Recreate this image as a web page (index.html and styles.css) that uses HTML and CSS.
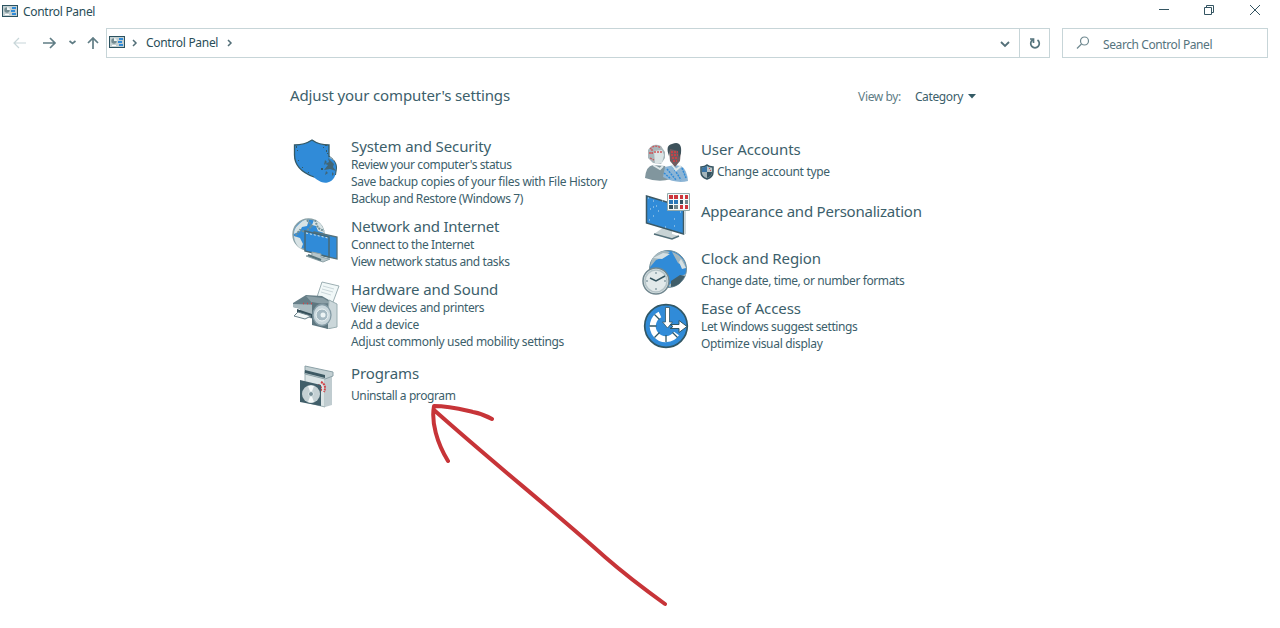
FILE: index.html
```html
<!DOCTYPE html>
<html lang="en">
<head>
<meta charset="utf-8">
<title>Control Panel</title>
<link rel="stylesheet" href="styles.css">
</head>
<body>
<svg width="0" height="0" class="defs">
  <defs>
    <symbol id="panel" viewBox="0 0 16 12">
      <rect x=".5" y=".5" width="15" height="11" fill="#c4d0d2" stroke="#2c5260"/>
      <circle cx="5" cy="5" r="2.700" fill="#738b91"/><path d="M5 5V2a3 3 0 0 1 3 3z" fill="#edf5f5"/>
      <path d="M10 2h4v2h-4zM9 5h4v2H9zM10 8h4v2h-4z" fill="#308bd8"/><path d="M3 9.500h4" stroke="#fff"/>
    </symbol>
  </defs>
</svg>
<header class="titlebar">
  <svg class="app-icon" width="16" height="12"><use href="#panel"/></svg>
  <span class="app-title">Control Panel</span>
  <svg class="window-controls" width="104" height="14" fill="none" stroke="#345562">
    <path d="M1 6.500h10M46.500 4.500h7v7h-7zM48.500 4.500v-2h7v7h-2M92 2l10 10M102 2L92 12"/>
  </svg>
</header>
<nav class="toolbar">
  <svg class="nav-icons" width="106" height="30" fill="none" stroke="#607d85" stroke-width="1.700">
    <path d="M26 15H14M19 10l-5 5 5 5" stroke="#c8d6d9" stroke-width="1.200"/>
    <path d="M43 15h12M50 10l5 5-5 5M93 21V10M88 15l5-5 5 5"/><path d="M69.500 13l3 2.500 3-2.500"/>
  </svg>
  <div class="address">
    <svg class="crumb-icon" width="16" height="12"><use href="#panel"/></svg>
    <svg class="chevron" width="6" height="8"><path d="M1 1l3 3-3 3"/></svg>
    <span class="crumb">Control Panel</span>
    <svg class="chevron" width="6" height="8"><path d="M1 1l3 3-3 3"/></svg>
    <svg class="drop" width="10" height="7"><path d="M1 1l4 4 4-4"/></svg>
    <span class="refresh"><svg width="12" height="13" fill="none" stroke="#55747d" stroke-width="1.700"><path d="M8.500 3a4.300 4.300 0 1 1-5 0M1 2h3.500v4"/></svg></span>
  </div>
  <div class="search">
    <svg width="14" height="14" fill="none" stroke="#6f8990" stroke-width="1.200"><circle cx="8.500" cy="5" r="4"/><path d="M5.500 8L1 12.500"/></svg>
    <span class="search-text">Search Control Panel</span>
  </div>
</nav>
<main>
  <div class="heading">
    <h1>Adjust your computer's settings</h1>
    <div class="view"><span class="label">View by:</span><span class="category">Category</span><svg width="8" height="5"><path d="M0 0h8L4 4.500z" fill="#345a65"/></svg></div>
  </div>
  <div class="columns">
    <div class="column left">
      <section class="item system">
        <svg class="icon" width="50" height="50">
          <path d="M4.500 9q10 0 17.500-5 7 5 17 5v12c0 10-7 17-15 20C13 37 4.500 30 4.500 19z" fill="#308bd8" stroke="#345966" stroke-width="1.300"/>
          <path d="M24 38c8-3 13-10 14-17 5 2 8 5 8.500 9 0 10-3 15-9 16.500-6 1-9-2-13.500-5z" fill="#308bd8"/>
          <path d="M39 20c4 3 7.500 6 7.500 12l-1 7" fill="none" stroke="#345966"/>
          <path d="M38 22l6 6-1 3 3 4-6-2-6 1 4-5-3-1 4-2z" fill="#426676"/><path d="M35 24l2 2-3 3zm1 11l2 2-3 2zm6 1l2 2-2 2z" fill="#426676"/><path d="M6 10h1v2H6zm29-1h2v1h-2zm1 5h1v2h-1zM31 32h2v2h-2zM7 14h1v1H7zm1 10h1v1H8zm4 7h1v1h-1zm6 5h1v1h-1zm15-25h1v1h-1zm4 6h1v1h-1z" fill="#345966"/>
        </svg>
        <div class="text"><h2>System and Security</h2><a>Review your computer's status</a><a class="wide">Save backup copies of your files with File History</a><a>Backup and Restore (Windows 7)</a></div>
      </section>
      <section class="item network">
        <svg class="icon" width="50" height="50">
          <circle cx="18.500" cy="18.500" r="15.500" fill="#308bd8" stroke="#8ba2a7" stroke-width="1.500"/>
          <path d="M8 9c4-5 8-6 11-5l-2 6-5 1-2 4-6 3c0-4 1-6 4-9zM4 20l6 2 3 6-2 5C7 30 4 25 4 20zm20-16c7 2 10 8 10 13l-6-2-2-5-4-1z" fill="#d8e3e5"/><path d="M17 4l5 6-7 6-5-2-5 6M25 4l3 8 6 3" fill="none" stroke="#718f97" stroke-width="2" stroke-dasharray="2 1"/>
          <path d="M24 16l23 5v22l-22-5z" fill="#308bd8" stroke="#56727a" stroke-width="1.300"/>
          <path d="M15 15l24 6v20l-24-6z" fill="#308bd8" stroke="#486974" stroke-width="1.500"/><path d="M16 17l22 5" stroke="#d9e5e7" stroke-dasharray="2 2"/>
          <path d="M22 36l9 2v3l9 2-7 3-17-6 6-1z" fill="#b7c6ca" stroke="#8da2a7"/><path d="M18 39l13 5" stroke="#55737b" stroke-width="2"/>
        </svg>
        <div class="text"><h2 class="close">Network and Internet</h2><a>Connect to the Internet</a><a>View network status and tasks</a></div>
      </section>
      <section class="item hardware">
        <svg class="icon" width="50" height="50">
          <path d="M27 18l5-15 17 4-6 16z" fill="#f1f8f8" stroke="#9dafb3"/><path d="M33 7l11 3M32 10l11 3M31 13l10 3" stroke="#cad7da"/>
          <path d="M3 24l13-8 16 1 12 7-10 11L3 28z" fill="#667e87"/><path d="M16 17l17 2 8 5-18 1z" fill="#8ca0a7"/>
          <path d="M3 25v3l7 2v6l13 4 11-4V26z" fill="#aabbc0"/><path d="M7 30l15 5v4L7 34z" fill="#344f59"/><path d="M8 33l13 4-6 3-11-3z" fill="#f3f8f8" stroke="#69818a"/>
          <path d="M39 21l8 4v23l-10 2z" fill="#cbd7da" stroke="#99adb1"/><path d="M22 23l16 3v24l-16-4z" fill="#5e7780"/><ellipse cx="32" cy="36" rx="9" ry="10.500" fill="#c9d7dc" stroke="#849ba5" stroke-width="1.300"/><circle cx="32" cy="36" r="6" fill="#a5b9c2" stroke="#edf5f6"/><circle cx="33" cy="36" r="2.500" fill="#ecf4f5"/><path d="M13 24.500h1m3 0h1m3 0h1" stroke="#d44144" stroke-width="1.500"/>
        </svg>
        <div class="text"><h2>Hardware and Sound</h2><a>View devices and printers</a><a class="natural">Add a device</a><a class="wide">Adjust commonly used mobility settings</a></div>
      </section>
      <section class="item programs">
        <svg class="icon" width="50" height="50">
          <path d="M15 8l20 5v31l-20-5z" fill="#dce5e6" stroke="#9eb0b4"/><path d="M35 13l7-2v31l-7 2z" fill="#c0ccd0"/><path d="M15 3l28 6v4l-8 3-20-5z" fill="#c3d0d3" stroke="#8ca1a7"/><path d="M15 7l20 5v3l-20-5z" fill="#3d5963"/>
          <path d="M31 19q6 3 3 10M28 22q5 2 2 7" fill="none" stroke="#d14448" stroke-width="2" stroke-dasharray="2 .7"/>
          <path d="M10 17l21 5v21l-21-4z" fill="#405e69"/><circle cx="21" cy="31" r="9" fill="#c4d0d3"/><path d="M21 31l-3-8a9 9 0 0 1 6 0zM21 31l3 8a9 9 0 0 1-6 0z" fill="#f5f9f9"/><circle cx="21" cy="31" r="2.500" fill="#768e96" stroke="#e2ebed"/>
        </svg>
        <div class="text spaced"><h2>Programs</h2><a>Uninstall a program</a></div>
      </section>
    </div>
    <div class="column right">
      <section class="item users">
        <svg class="icon" width="50" height="50">
          <path d="M4 38q1-12 8-13l12 1 6 13q-12 4-26-1z" fill="#81969e"/><path d="M7 10q5-8 13-4l4 6v6l-4 6-8-1-5-5z" fill="#a8b6ba"/><path d="M13 11l8-1 2 5-2 8-7 1z" fill="#dbe4e5"/><path d="M9 9q5-5 11-1M8 13h4M9 18l4 2M11 9v5M13 12h8" fill="none" stroke="#ce555a" stroke-width="1.300" stroke-dasharray="2 1"/>
          <path d="M22 37l2-10 9-2 7 1q6 3 7 15-12 3-25-4z" fill="#8db5d5"/><path d="M26 29l9 11M32 27l8 13M23 33l7 6M41 28l4 10" stroke="#308bd8" stroke-width="1.500" stroke-dasharray="2 1"/><path d="M28 9q5-5 12 0l-1 12-5 6-5-6z" fill="#705c61"/><path d="M28 16q-4-11 3-12c7-3 10 1 9 9l-2 5-1-7-8-2z" fill="#3d525b"/><path d="M30 12h7M30 15h7M31 18h6M32 21h4" stroke="#c34248" stroke-width="1.800" stroke-dasharray="2 1"/><path d="M12 25l7 4 3-3M31 25l4 5 5-4" fill="none" stroke="#dfe8ea" stroke-width="2"/>
        </svg>
        <div class="text spaced"><h2>User Accounts</h2><a class="shield-link wide"><svg width="14" height="16"><path d="M1 3q4 0 6-2 2 2 6 2v5q0 5-6 7-6-2-6-7z" fill="#a3b5ba" stroke="#355461" stroke-width="1.500"/><path d="M2 4l5-2v6H2z" fill="#3974a4"/><path d="M7 8h5q0 4-5 6z" fill="#345260"/><path d="M7 3l5 1v4H7z" fill="#bac5c7"/><path d="M9 4h1v1H9zm1 2h1v1h-1z" fill="#d14e52"/></svg>Change account type</a></div>
      </section>
      <section class="item appearance">
        <svg class="icon" width="50" height="50">
          <path d="M23 35l8 2v5l7 2-7 3-18-5z" fill="#c8d3d5"/><path d="M13 42l18 5 7-3" fill="none" stroke="#536f79" stroke-width="1.500"/>
          <path d="M5.500 4l37 11v27l-37-11z" fill="#308bd8" stroke="#3c5965" stroke-width="1.500"/><path d="M43 10h2v32h-2z" fill="#cbd6d9"/><path d="M7 6h1m4 3h1m8 0h1M9 17h1m2-2h1m4 4h1m-3-5h1M8 28h1m3-4h1m11 11h1m8-1h1m5-14h1m-7 7h1" stroke="#c8e0ec"/>
          <path d="M26.500 1.500h22v17h-22z" fill="#f5faf9" stroke="#91a9ab"/><path d="M28 3h4v4h-4zm5 0h4v4h-4zm6 0h3v4h-3zm5 0h3v4h-3zM39 13h3v4h-3zm5 0h3v4h-3z" fill="#cc353c"/><path d="M28 8h4v4h-4zM33 8h4v4h-4z" fill="#2b78b8"/><path d="M28 13h4v4h-4zM39 8h3v4h-3z" fill="#345260"/><path d="M33 13h4v4h-4zM44 8h3v4h-3z" fill="#71878e"/>
        </svg>
        <div class="text"><h2 class="close">Appearance and Personalization</h2></div>
      </section>
      <section class="item clock">
        <svg class="icon" width="50" height="50">
          <circle cx="27" cy="20" r="18.500" fill="#308bd8" stroke="#738e97"/><path d="M11 10c5-8 12-9 18-7l-6 5-8 3-5 6-1 1zM31 3c9 3 13 9 14 16l-8-5zM28 36l9-8 8-3c-2 7-8 12-17 13z" fill="#a4b7be"/><path d="M30 32l9-6 5 1c-3 6-7 10-14 11z" fill="#405e6a"/><path d="M12 9l10-5 7 1-8 5zM38 13l3 7 4-1-5-9z" fill="#d5e0e3"/>
          <circle cx="15" cy="32" r="13" fill="#e2e9ea" stroke="#71878f" stroke-width="1.500"/><circle cx="15" cy="32" r="11" fill="none" stroke="#b4c3c7" stroke-width="1.500"/><path d="M9 29l6 3 9-5" fill="none" stroke="#365560" stroke-width="1.500"/><path d="M15 23v2M15 39v2M5 32h2M23 32h2" stroke="#637f89"/>
        </svg>
        <div class="text spaced"><h2>Clock and Region</h2><a>Change date, time, or number formats</a></div>
      </section>
      <section class="item ease">
        <svg class="icon" width="50" height="50">
          <circle cx="25" cy="27" r="21.300" fill="#308bd8" stroke="#315765" stroke-width="1.700"/><path d="M19 15.500A13 13 0 1 0 35.500 34.500" fill="none" stroke="#fff" stroke-width="6"/><path d="M8.500 27h7M13.500 38.500l5-5M25 43v-7M36.500 38.500l-5-5M13.500 15.500l5 5" stroke="#315765" stroke-width="1.300"/>
          <path d="M24.500 8.500h4V23h3l-5 6-5-6h3z" fill="#fff" stroke="#315765" stroke-width=".8"/><path d="M29 25.500h9v-4l8 6-8 6v-4h-9l3-2z" fill="#fff" stroke="#315765" stroke-width="1"/>
        </svg>
        <div class="text"><h2>Ease of Access</h2><a>Let Windows suggest settings</a><a class="wide">Optimize visual display</a></div>
      </section>
    </div>
  </div>
</main>
<svg class="annotation" width="250" height="215" fill="none" stroke="#c73438" stroke-width="4" stroke-linecap="round" stroke-linejoin="round">
  <path d="M67 19C60 15 54 13 48 12 35 9 24 6 9 6c-3 16 3 37 14 55M9 10C73 67 123 106 180 157q24 21 60 47"/>
</svg>
</body>
</html>
```
FILE: styles.css
```css
* { box-sizing: border-box; }
body { margin: 0; width: 1280px; height: 628px; overflow: hidden; position: relative; background: #fff; color: #3c606b; font: 12px/17px "Noto Sans", "Open Sans", sans-serif; white-space: nowrap; }
svg { display: block; flex: none; }
h1, h2 { margin: 0; font-weight: 400; }
.defs { position: absolute; }
.titlebar { display: flex; align-items: center; height: 24px; padding: 0 0 1px 2px; }
.app-icon { margin-top: -1px; }
.app-title { margin-left: 5px; color: #294d58; letter-spacing: -.3px; }
.window-controls { margin: -3px 18px 0 auto; }
.toolbar { display: flex; height: 30px; margin-top: 4px; }
.address { display: flex; align-items: center; width: 944px; border: 1px solid #c7d5d8; padding-left: 2px; }
.crumb-icon { margin-top: -2px; }
.crumb { margin: -1px 9px 0 8px; color: #294d58; letter-spacing: -.3px; }
.chevron { margin-left: 7px; fill: none; stroke: #536f78; stroke-width: 1.5; }
.crumb + .chevron { margin-left: 0; }
.drop { margin: 2px 9px 0 auto; fill: none; stroke: #536f78; stroke-width: 1.8; }
.refresh { height: 28px; width: 30px; border-left: 1px solid #c7d5d8; display: flex; align-items: center; justify-content: center; }
.search { display: flex; align-items: center; width: 206px; margin-left: 12px; padding-left: 13px; border: 1px solid #c7d5d8; color: #55747e; }
.search-text { margin: 3px 0 0 13px; letter-spacing: -.4px; }
.search svg { margin-top: -1px; }
.heading { display: flex; justify-content: space-between; align-items: center; width: 686px; height: 24px; margin: 26px 0 0 290px; }
h1, h2 { font-size: 15px; line-height: 20px; letter-spacing: -.1px; }
h1 { margin-top: -2px; letter-spacing: -.13px; }
h2.close { letter-spacing: -.22px; }
.view { display: flex; align-items: center; }
.label { margin-right: 14px; color: #607d86; letter-spacing: -.38px; }
.category { margin-right: 5px; letter-spacing: -.38px; }
.columns { display: grid; grid-template-columns: 351px 350px; margin: 28px 0 0 290px; }
.item { display: flex; gap: 11px; }
.right .item { gap: 10px; }
.right { padding-top: 4px; }
.right h2 { margin-top: -1px; }
.text { display: flex; flex-direction: column; }
.text a { letter-spacing: -.4px; }
.text a.wide { letter-spacing: -.32px; }
.text a.natural { letter-spacing: -.25px; }
.spaced h2 { margin-bottom: 4px; }
.system { height: 80px; }
.network { height: 63px; }
.hardware { height: 84px; }
.programs { height: 50px; }
.users { height: 52px; }
.appearance { height: 57px; }
.appearance .text { padding-top: 10px; }
.clock { height: 50px; }
.ease { height: 60px; }
.shield-link { display: flex; align-items: center; gap: 3px; margin-left: -1px; }
.annotation { position: absolute; left: 425px; top: 400px; }
```
